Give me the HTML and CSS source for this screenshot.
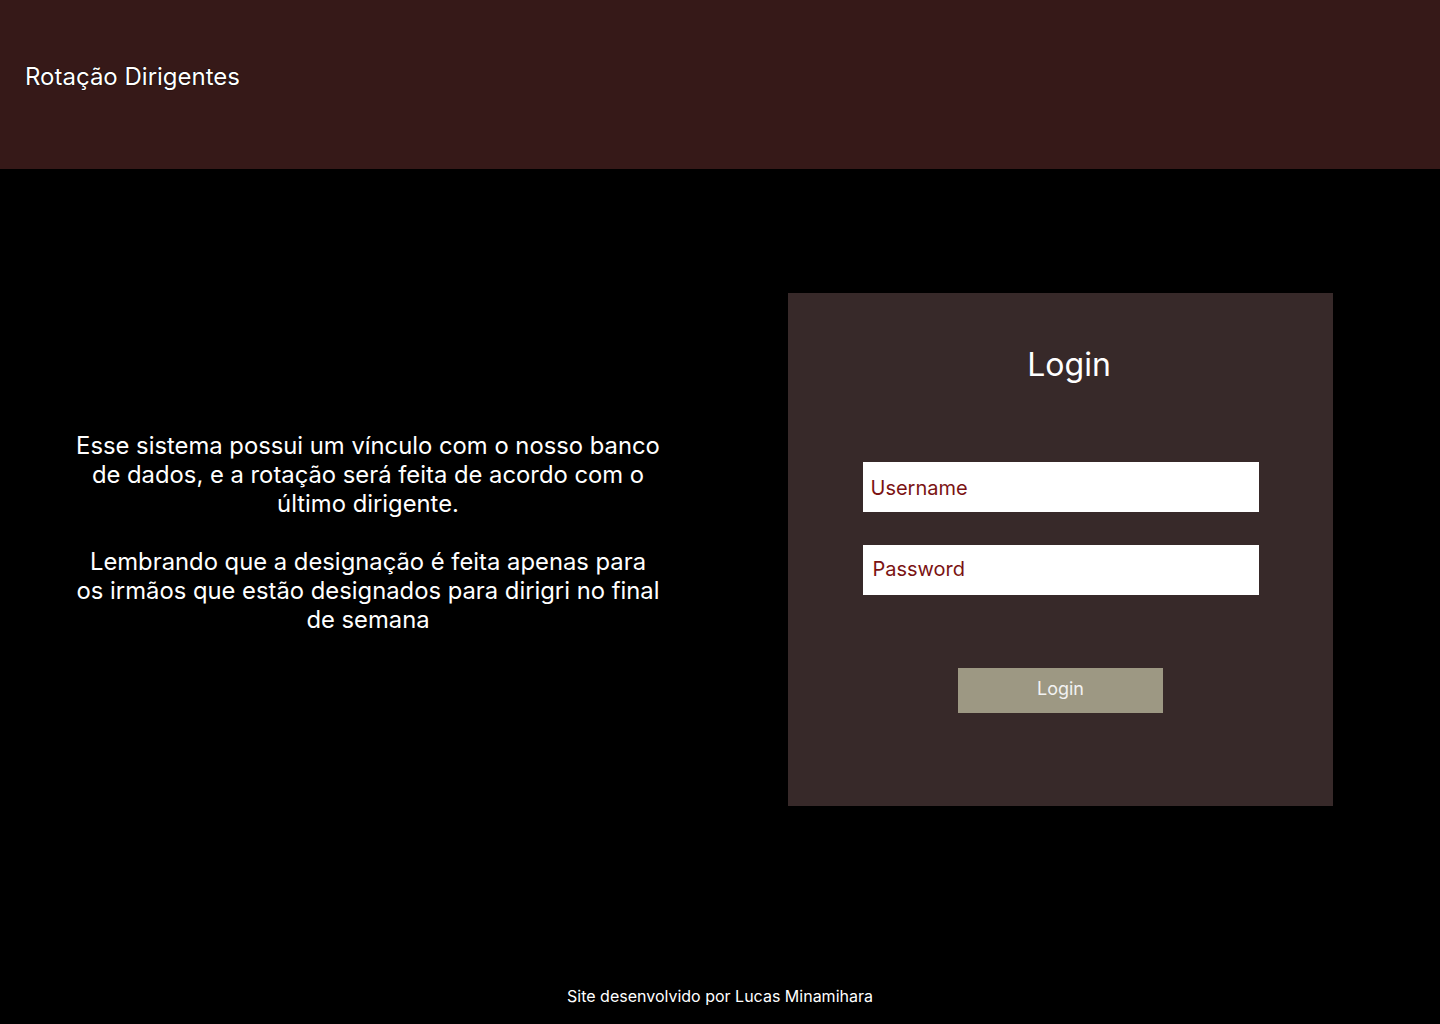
FILE: index.html
```html
<!DOCTYPE html>
<html lang="pt-BR">
<head>
<meta charset="utf-8">
<title>Rotação Dirigentes</title>
<link rel="stylesheet" href="styles.css">
</head>
<body>
<header class="topbar">
  <h1 class="brand">Rotação Dirigentes</h1>
</header>
<main class="main">
  <section class="intro">
    <p>Esse sistema possui um vínculo com o nosso banco de dados, e a rotação será feita de acordo com o último dirigente.</p>
    <p>Lembrando que a designação é feita apenas para os irmãos que estão designados para dirigri no final de semana</p>
  </section>
  <section class="card">
    <h2 class="card-title">Login</h2>
    <form class="form">
      <input class="field" type="text" placeholder="Username">
      <input class="field field-pass" type="password" placeholder="Password">
      <button class="btn" type="button">Login</button>
    </form>
  </section>
</main>
<footer class="footer">Site desenvolvido por Lucas Minamihara</footer>
</body>
</html>
```

FILE: styles.css
```css
* { box-sizing: border-box; }
html, body { margin: 0; padding: 0; }
body {
  background: #000;
  color: #fff;
  font-family: Inter, "Noto Sans", sans-serif;
  height: 1024px;
  display: flex;
  flex-direction: column;
}
.topbar {
  background: #361918;
  height: 169px;
  display: flex;
  align-items: center;
  padding-left: 25px;
}
.brand {
  margin: 0;
  font-size: 24px;
  font-weight: 400;
  color: #fff;
  text-shadow: 0 0 1px #000, 0 0 1px #000;
  position: relative;
  top: -8px;
}
.main {
  flex: 1;
  display: flex;
  align-items: flex-start;
  padding-top: 124px;
  padding-left: 68px;
  gap: 120px;
}
.intro {
  width: 600px;
  padding: 0 6px;
  margin-top: 138px;
  text-align: center;
  font-size: 23.8px;
  line-height: 29px;
}
.intro p { margin: 0 0 29px; }
.card {
  width: 545px;
  height: 513px;
  background: #372929;
  display: flex;
  flex-direction: column;
  align-items: center;
  padding-top: 50px;
}
.card-title {
  margin: 0 0 0 17px;
  font-size: 32px;
  font-weight: 400;
  line-height: 44px;
}
.form {
  display: flex;
  flex-direction: column;
  align-items: center;
  margin-top: 75px;
}
.field {
  width: 396px;
  height: 50px;
  border: none;
  outline: none;
  background: #fff;
  font-family: Inter, "Noto Sans", sans-serif;
  font-size: 20px;
  padding: 2px 8px 0;
  color: #7b1313;
  margin-bottom: 33px;
}
.field::placeholder { color: #7b1313; opacity: 1; }
.field-pass { padding: 0 8px 2px 10px; }
.btn {
  margin-top: 40px;
  width: 205px;
  height: 45px;
  border: none;
  padding: 0 0 4px;
  background: #9d9883;
  color: #f2f2f2;
  font-family: Inter, "Noto Sans", sans-serif;
  font-size: 18px;
}
.footer {
  text-align: center;
  font-size: 16px;
  color: #fff;
  padding-bottom: 18px;
}
```
